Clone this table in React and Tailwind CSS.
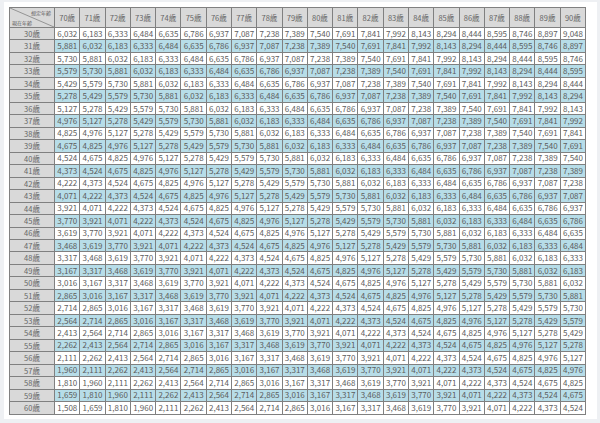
import React from "react";

// values indexed by n = (col age - 70) - (row age - 30) + 30
const VALS = [
  1508, 1659, 1810, 1960, 2111, 2262, 2413, 2564, 2714, 2865,
  3016, 3167, 3317, 3468, 3619, 3770, 3921, 4071, 4222, 4373,
  4524, 4675, 4825, 4976, 5127, 5278, 5429, 5579, 5730, 5881,
  6032, 6183, 6333, 6484, 6635, 6786, 6937, 7087, 7238, 7389,
  7540, 7691, 7841, 7992, 8143, 8294, 8444, 8595, 8746, 8897,
  9048,
];

const cols = Array.from({ length: 21 }, (_, i) => 70 + i);
const rows = Array.from({ length: 31 }, (_, i) => 30 + i);

const fmt = (n) => n.toLocaleString("en-US");

function App() {
  return (
    <div
      className="w-[600px] h-[423px] bg-[#eef0f3] pt-[2px] pl-[4px] pr-[3px] pb-[4px]"
      style={{ fontFamily: '"Noto Sans CJK JP", "Noto Sans", sans-serif' }}
    >
      <div className="w-full h-full bg-white pt-[5px] pl-[5px]">
        <table className="table-fixed border-collapse w-[577px] text-[8px] leading-none text-[#5c5c5c]">
          <colgroup>
            <col className="w-[45px]" />
            {cols.map((c) => (
              <col key={c} />
            ))}
          </colgroup>
          <thead>
            <tr className="h-[20px]">
              <th className="relative border border-[#808080] bg-[#d9d9d9] p-0 font-normal">
                <svg
                  className="absolute inset-0 w-full h-full"
                  viewBox="0 0 45 20"
                  preserveAspectRatio="none"
                >
                  <line x1="0" y1="0" x2="45" y2="20" stroke="#808080" strokeWidth="0.8" />
                </svg>
                <span className="absolute right-[3px] top-[2px] text-[5px]">想定年齢</span>
                <span className="absolute left-[2px] bottom-[2px] text-[5px]">現在年齢</span>
              </th>
              {cols.map((c) => (
                <th
                  key={c}
                  className="border border-[#808080] bg-[#d9d9d9] p-0 font-normal text-center text-[7.5px] text-[#666]"
                >
                  {c}歳
                </th>
              ))}
            </tr>
          </thead>
          <tbody>
            {rows.map((r, ri) => {
              const odd = ri % 2 === 1;
              return (
                <tr key={r} className="h-[12.47px]">
                  <td className="border border-[#808080] bg-[#d9d9d9] p-0 text-center text-[7.5px] text-[#666]">
                    {r}歳
                  </td>
                  {cols.map((c) => {
                    const n = c - 70 - (r - 30) + 30;
                    return (
                      <td
                        key={c}
                        className={
                          "border border-[#808080] p-0 pr-[2px] text-right " +
                          (odd ? "bg-[#b7dde8]" : "bg-white")
                        }
                      >
                        {fmt(VALS[n])}
                      </td>
                    );
                  })}
                </tr>
              );
            })}
          </tbody>
        </table>
      </div>
    </div>
  );
}

export default App;
